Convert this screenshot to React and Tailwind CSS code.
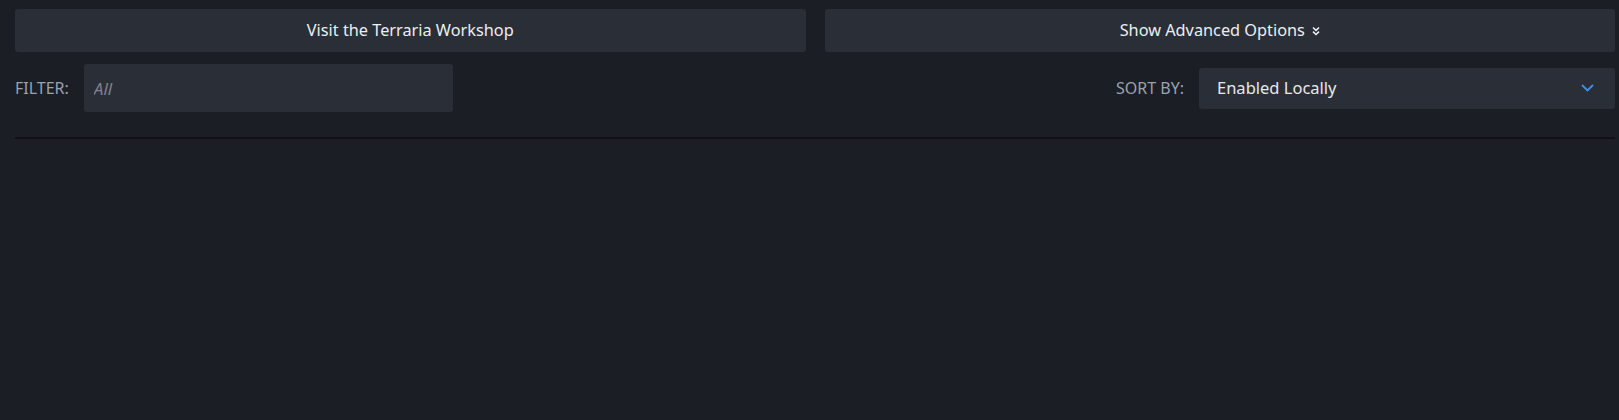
import { useState } from "react";

const DoubleChevron = () => (
    <svg width="8" height="10" viewBox="0 0 8 10" fill="none" stroke="currentColor" strokeWidth="1.6">
        <path d="M1 1.5 L4 4.3 L7 1.5" />
        <path d="M1 5.7 L4 8.5 L7 5.7" />
    </svg>
);

const ChevronDown = () => (
    <svg width="13" height="8" viewBox="0 0 13 8" fill="none" stroke="#3f8fe6" strokeWidth="1.8">
        <path d="M1 1 L6.5 6.5 L12 1" />
    </svg>
);

const App = () => {
    const [filter, setFilter] = useState("");

    return (
        <div className="min-h-screen w-full bg-[#1b1e25] pl-[15px] pr-[4px] pt-[9px] font-['Noto_Sans',sans-serif]">
            {/*top buttons*/}
            <div className="grid grid-cols-2 gap-[19px]">
                <button className="h-[43px] rounded-[3px] bg-[#2a2e37] text-[16.3px] text-[#eceef1]">
                    Visit the Terraria Workshop
                </button>
                <button className="flex h-[43px] items-center justify-center gap-[7px] rounded-[3px] bg-[#2a2e37] text-[16.3px] text-[#eceef1]">
                    Show Advanced Options
                    <DoubleChevron />
                </button>
            </div>

            {/*filter and sort*/}
            <div className="mt-[12px] flex h-[48px] flex-row items-center">
                <span className="mr-[15px] text-[16px] text-[#9aa2ad]">FILTER:</span>
                <input
                    value={filter}
                    onChange={(e) => setFilter(e.target.value)}
                    placeholder="All"
                    className="h-[48px] w-[369px] rounded-[3px] bg-[#2a2e37] px-[10px] text-[17px] text-[#e8ebee] italic outline-none placeholder:text-[#7d838c]"
                />
                <span className="ml-auto mr-[15px] text-[16px] text-[#9aa2ad]">SORT BY:</span>
                <div className="flex h-[41px] w-[416px] items-center justify-between rounded-[3px] bg-[#2a2e37] pl-[18px] pr-[21px]">
                    <span className="text-[16.5px] text-[#e6e9ec]">Enabled Locally</span>
                    <ChevronDown />
                </div>
            </div>

            {/*divider*/}
            <div className="mt-[25px] h-[2px] bg-[#101217]"></div>
        </div>
    );
};

export default App;
